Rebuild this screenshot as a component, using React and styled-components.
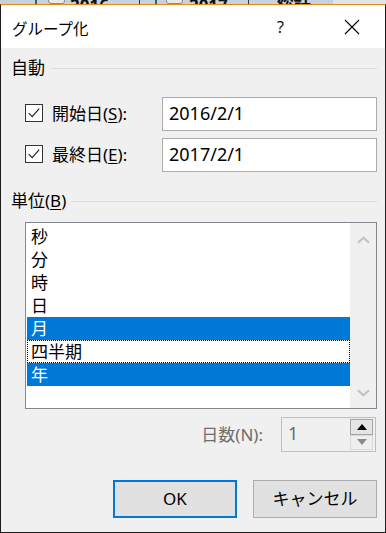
import React from "react";
import styled, { createGlobalStyle } from "styled-components";

const GlobalStyle = createGlobalStyle`
  html, body {
    margin: 0;
    padding: 0;
    background: #ffffff;
  }
  body {
    font-family: "Noto Sans", "Noto Sans CJK JP", sans-serif;
    color: #000;
  }
`;

const units = [
  { label: "秒" },
  { label: "分" },
  { label: "時" },
  { label: "日" },
  { label: "月", selected: true },
  { label: "四半期", focused: true },
  { label: "年", selected: true },
];

const App = () => {
  return (
    <Page>
      <GlobalStyle />
      <Strip>
        <Tick $left={35} />
        <SheetBox $left={11} />
        <SheetText $left={5}>2016</SheetText>
        <Bar $left={30} />
        <Tick $left={15} />
        <SheetBox $left={9} />
        <SheetText $left={6}>2017</SheetText>
        <Bar $left={20} />
        <SheetText $left={28}>総計</SheetText>
        <Lighter />
      </Strip>
      <Dialog>
        <TitleBar>
          <Title>グループ化</Title>
          <Help>?</Help>
          <CloseIcon width="16" height="16" viewBox="0 0 16 16">
            <path d="M1 1 L15 15 M15 1 L1 15" stroke="#000" strokeWidth="1.1" />
          </CloseIcon>
        </TitleBar>

        <Body>
          <GroupHeader>
            <span>自動</span>
            <Rule $gap={6} />
          </GroupHeader>

          <DateRow $top={19}>
            <CheckBox />
            <FieldLabel>
              開始日(<u>S</u>):
            </FieldLabel>
            <DateInput>2016/2/1</DateInput>
          </DateRow>
          <DateRow $top={7}>
            <CheckBox />
            <FieldLabel>
              最終日(<u>E</u>):
            </FieldLabel>
            <DateInput>2017/2/1</DateInput>
          </DateRow>

          <GroupHeader $top={19}>
            <span>
              単位(<u>B</u>)
            </span>
            <Rule $gap={5} />
          </GroupHeader>

          <ListBox>
            <Items>
              {units.map((unit) => (
                <Item
                  key={unit.label}
                  $selected={unit.selected}
                  $focused={unit.focused}
                >
                  {unit.label}
                </Item>
              ))}
            </Items>
            <ScrollBar>
              <Chevron viewBox="0 0 14 8">
                <path d="M1 7 L7 1.5 L13 7" />
              </Chevron>
              <Chevron viewBox="0 0 14 8">
                <path d="M1 1 L7 6.5 L13 1" />
              </Chevron>
            </ScrollBar>
          </ListBox>

          <SpinRow>
            <SpinLabel>日数(N):</SpinLabel>
            <SpinBox>
              <SpinValue>1</SpinValue>
              <SpinButtons>
                <SpinButton $active>
                  <Triangle viewBox="0 0 10 6" $active>
                    <path d="M0 6 L5 0 L10 6 Z" />
                  </Triangle>
                </SpinButton>
                <SpinButton>
                  <Triangle viewBox="0 0 10 6">
                    <path d="M0 0 L5 6 L10 0 Z" />
                  </Triangle>
                </SpinButton>
              </SpinButtons>
            </SpinBox>
          </SpinRow>

          <ButtonRow>
            <Button $primary>OK</Button>
            <Button>キャンセル</Button>
          </ButtonRow>
        </Body>
      </Dialog>
    </Page>
  );
};

const CheckBox = () => (
  <Box>
    <svg width="16" height="16" viewBox="0 0 16 16">
      <path
        d="M2.8 8.2 L6.2 11.6 L13.2 3.6"
        fill="none"
        stroke="#222"
        strokeWidth="1.2"
      />
    </svg>
  </Box>
);

const Page = styled.div`
  width: 386px;
  height: 533px;
  display: flex;
  flex-direction: column;
  overflow: hidden;
`;

const Strip = styled.div`
  height: 4px;
  background: #c8d1e0;
  display: flex;
  align-items: flex-end;
  overflow: hidden;
`;

const Tick = styled.div`
  flex: none;
  width: 2px;
  height: 10px;
  margin-left: ${(p) => p.$left}px;
  background: #217346;
`;

const SheetBox = styled.div`
  flex: none;
  width: 15px;
  height: 12px;
  margin-left: ${(p) => p.$left}px;
  border: 1px solid #8a8a8a;
  border-radius: 3px;
  background: #e8e8e8;
`;

const SheetText = styled.div`
  flex: none;
  margin-left: ${(p) => p.$left}px;
  font-size: 17px;
  font-weight: 700;
  line-height: 17px;
  height: 17px;
  color: #111;
  margin-bottom: -10px;
`;

const Bar = styled.div`
  flex: none;
  width: 1px;
  height: 10px;
  margin-left: ${(p) => p.$left}px;
  background: #333;
`;

const Lighter = styled.div`
  flex: 1;
  height: 4px;
  margin-left: 22px;
  background: #dfe3ea;
`;

const Dialog = styled.div`
  flex: 1;
  display: flex;
  flex-direction: column;
  border: 1px solid #1c1c1c;
  border-top: 1px solid #e68a14;
`;

const TitleBar = styled.div`
  height: 43px;
  background: #ffffff;
  display: flex;
  align-items: center;
  padding-left: 11px;
`;

const Title = styled.div`
  flex: 1;
  font-family: "Noto Sans CJK JP", sans-serif;
  font-size: 15.5px;
  line-height: 20px;
  margin-top: 2px;
`;

const Help = styled.div`
  width: 12px;
  font-size: 16px;
  line-height: 20px;
  color: #111;
  margin-right: 55px;
  margin-top: 1px;
`;

const CloseIcon = styled.svg`
  flex: none;
  margin-right: 25px;
  margin-top: 1px;
`;

const Body = styled.div`
  flex: 1;
  background: #f0f0f0;
  display: flex;
  flex-direction: column;
  font-size: 17px;
`;

const GroupHeader = styled.div`
  margin-top: ${(p) => p.$top ?? 10}px;
  padding-left: 10px;
  margin-right: 8px;
  height: 20px;
  line-height: 20px;
  display: flex;
  align-items: center;
  u {
    text-underline-offset: 2px;
  }
`;

const Rule = styled.div`
  flex: 1;
  height: 1px;
  background: #dcdcdc;
  margin-left: ${(p) => p.$gap}px;
`;

const DateRow = styled.div`
  margin-top: ${(p) => p.$top}px;
  height: 34px;
  display: flex;
  align-items: center;
  padding-left: 24px;
  margin-right: 8px;
`;

const Box = styled.div`
  flex: none;
  width: 16px;
  height: 16px;
  border: 1px solid #333;
  background: #fff;
  display: flex;
  margin-top: -3px;
`;

const FieldLabel = styled.div`
  flex: 1;
  margin-left: 9px;
  line-height: 22px;
  u {
    text-underline-offset: 2px;
  }
`;

const DateInput = styled.div`
  box-sizing: border-box;
  width: 215px;
  height: 34px;
  border: 1px solid #ababab;
  background: #fff;
  padding-left: 6px;
  line-height: 30px;
  font-size: 18px;
`;

const ListBox = styled.div`
  margin: 11px 8px 0 24px;
  height: 187px;
  border: 1px solid #828790;
  background: #fff;
  box-sizing: border-box;
  display: flex;
  padding: 1px;
`;

const Items = styled.div`
  flex: 1;
  display: flex;
  flex-direction: column;
  padding-top: 1px;
`;

const Item = styled.div`
  height: 23px;
  box-sizing: border-box;
  line-height: 21px;
  padding-left: 3px;
  border: 1px solid ${(p) => (p.$focused ? "#000" : "transparent")};
  border-style: ${(p) => (p.$focused ? "dotted" : "solid")};
  background: ${(p) => (p.$selected ? "#0078d7" : "transparent")};
  color: ${(p) => (p.$selected ? "#fff" : "#000")};
`;

const ScrollBar = styled.div`
  width: 26px;
  margin: -1px -1px -1px 0;
  background: #f0f0f0;
  display: flex;
  flex-direction: column;
  justify-content: space-between;
  align-items: center;
  padding: 13px 0 11px;
`;

const Chevron = styled.svg`
  width: 13px;
  height: 8px;
  path {
    fill: none;
    stroke: #c2c2c2;
    stroke-width: 2.4;
  }
`;

const SpinRow = styled.div`
  margin: 8px 9px 0 0;
  display: flex;
  justify-content: flex-end;
  align-items: center;
  height: 35px;
`;

const SpinLabel = styled.div`
  color: #6d6d6d;
  margin-right: 18px;
  line-height: 22px;
`;

const SpinBox = styled.div`
  width: 95px;
  height: 35px;
  box-sizing: border-box;
  border: 1px solid #bfbfbf;
  background: #f0f0f0;
  display: flex;
  padding: 1px 2px 1px 6px;
`;

const SpinValue = styled.div`
  flex: 1;
  color: #6d6d6d;
  font-size: 18px;
  line-height: 28px;
`;

const SpinButtons = styled.div`
  width: 23px;
  display: flex;
  flex-direction: column;
`;

const SpinButton = styled.div`
  flex: 1;
  display: flex;
  align-items: center;
  justify-content: center;
  box-sizing: border-box;
  border: 1px solid ${(p) => (p.$active ? "#a5a5a5" : "#d9d9d9")};
  background: ${(p) => (p.$active ? "#e5e5e5" : "#efefef")};
`;

const Triangle = styled.svg`
  width: 10px;
  height: 6px;
  path {
    fill: ${(p) => (p.$active ? "#000" : "#8a8a8a")};
  }
`;

const ButtonRow = styled.div`
  margin: 28px 8px 0 0;
  display: flex;
  justify-content: flex-end;
  gap: 16px;
`;

const Button = styled.div`
  width: 124px;
  height: 38px;
  box-sizing: border-box;
  background: #e1e1e1;
  border: ${(p) => (p.$primary ? "2px solid #0078d7" : "1px solid #adadad")};
  display: flex;
  align-items: center;
  justify-content: center;
  font-size: 17px;
  line-height: 20px;
`;

export default App;
